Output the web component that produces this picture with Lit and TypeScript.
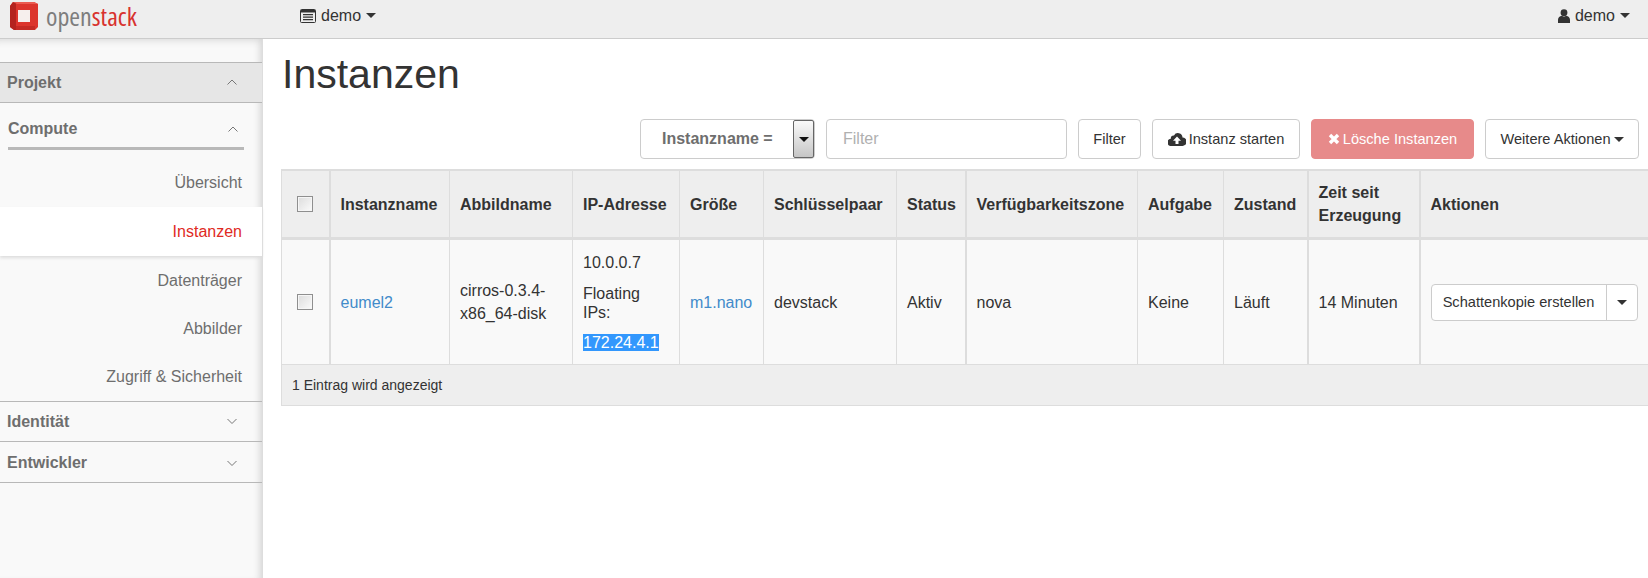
import { LitElement, html, css, svg } from "lit";
import { customElement } from "lit/decorators.js";

const caret = html`<svg class="caret" width="10" height="5" viewBox="0 0 10 5"><path d="M0 0h10L5 5z" fill="currentColor"/></svg>`;

const chevUp = svg`<path d="M.5 5.5L5 1l4.5 4.5" fill="none" stroke="currentColor" stroke-width="1"/>`;
const chevDown = svg`<path d="M.5 1L5 5.5 9.5 1" fill="none" stroke="currentColor" stroke-width="1"/>`;

@customElement("app-root")
export class AppRoot extends LitElement {
  static styles = css`
    :host {
      display: block;
      width: 1648px;
      height: 578px;
      overflow: hidden;
      background: #fff;
      font-family: "Liberation Sans", Arial, sans-serif;
      font-size: 16px;
      color: #333;
    }
    .topbar {
      height: 38px;
      background: #eee;
      border-bottom: 1px solid #ccc;
      display: flex;
      align-items: flex-start;
      box-sizing: content-box;
    }
    .brand {
      width: 300px;
      display: flex;
      align-items: center;
      padding: 1px 0 0 9px;
      box-sizing: border-box;
      height: 31px;
    }
    .wordmark {
      font-family: "Open Sans", sans-serif;
      font-size: 26px;
      font-weight: 500;
      font-stretch: 75%;
      line-height: 30px;
      color: #7d7d7d;
      margin-left: 7px;
      white-space: nowrap;
    }
    .wordmark b {
      font-weight: 500;
      color: #d8322e;
    }
    .menu {
      display: flex;
      align-items: center;
      gap: 5px;
      height: 31px;
      color: #333;
    }
    .spacer {
      flex: 1;
    }
    .usermenu {
      margin-right: 18px;
    }
    .body {
      display: flex;
      height: 539px;
    }
    .side {
      width: 263px;
      flex: none;
      background: #f9f9f9;
      box-shadow: inset -7px 0 7px -5px #d4d4d4, inset 0 9px 7px -7px #dcdcdc;
      border-right: 1px solid #ddd;
      box-sizing: border-box;
      padding-top: 23px;
      color: #6e6e6e;
    }
    .sec {
      height: 40px;
      border-bottom: 1px solid #b8b8b8;
      display: flex;
      align-items: center;
      justify-content: space-between;
      padding: 0 25px 0 7px;
      font-weight: 700;
      box-sizing: border-box;
    }
    .sec.top {
      background: #e6e6e6;
      border-top: 1px solid #b8b8b8;
      height: 41px;
    }
    .sec.tall {
      height: 41px;
      padding-top: 2px;
    }
    .sec.compute {
      border: 0;
      height: 47px;
      margin-left: 8px;
      padding: 8px 6px 0 0;
      border-bottom: 3px solid #b9b9b9;
      width: 236px;
    }
    .chev {
      color: #777;
    }
    .items {
      padding-top: 9px;
    }
    .item {
      height: 48px;
      display: flex;
      align-items: center;
      justify-content: flex-end;
      padding: 2px 20px 0 0;
      box-sizing: border-box;
    }
    .item.first {
      padding-top: 0;
    }
    .item.active {
      background: #fff;
      color: #e02a23;
      height: 49px;
      padding-top: 0;
      box-shadow: 0 2px 3px #ddd;
    }
    .item.last {
      height: 50px;
      padding-top: 0;
      border-bottom: 1px solid #b8b8b8;
    }
    .main {
      flex: 1;
      min-width: 0;
      padding-left: 18px;
    }
    h1 {
      margin: 0;
      font-weight: 400;
      font-size: 41px;
      line-height: 50px;
      padding-top: 10px;
      padding-left: 1px;
      height: 80px;
      box-sizing: border-box;
      color: #333;
    }
    .toolbar {
      display: flex;
      justify-content: flex-end;
      gap: 11px;
      height: 40px;
      padding-right: 9px;
      margin-bottom: 10px;
    }
    .btn {
      height: 40px;
      border: 1px solid #ccc;
      border-radius: 4px;
      background: #fff;
      display: flex;
      align-items: center;
      justify-content: center;
      gap: 3px;
      box-sizing: border-box;
      font-size: 14.6px;
    }
    .select {
      width: 175px;
      justify-content: flex-start;
      font-size: 16px;
      font-weight: 700;
      color: #6e6e6e;
      padding-left: 21px;
      position: relative;
    }
    .selarrow {
      position: absolute;
      right: 0;
      top: 0;
      width: 21px;
      height: 38px;
      box-sizing: border-box;
      border: 1px solid #666;
      border-radius: 2px;
      background: linear-gradient(#fafafa, #c6c6c6);
      display: flex;
      align-items: center;
      justify-content: center;
      color: #111;
    }
    .filter {
      width: 241px;
      justify-content: flex-start;
      font-size: 16px;
      color: #b0b0b0;
      padding-left: 16px;
    }
    .w63 {
      width: 63px;
    }
    .w148 {
      width: 148px;
    }
    .w163 {
      width: 163px;
    }
    .w154 {
      width: 154px;
    }
    .danger {
      background: #e78a8a;
      border-color: #e78a8a;
      color: #fff;
    }
    table {
      border-collapse: collapse;
      table-layout: fixed;
      width: 1367px;
      background: #f9f9f9;
    }
    th,
    td {
      border-left: 1px solid #ddd;
      border-right: 1px solid #ddd;
      padding: 0 10px;
      text-align: left;
      vertical-align: middle;
      line-height: 23px;
    }
    th:last-child,
    tbody td:last-child {
      border-right: 0;
    }
    th {
      background: #eee;
      height: 66px;
      border-top: 2px solid #ddd;
      border-bottom: 3px solid #ddd;
      font-weight: 700;
    }
    td {
      height: 124px;
      border-bottom: 1px solid #ddd;
    }
    .thick {
      border-right: 2px solid #ddd;
    }
    tfoot td {
      height: 40px;
      background: #eee;
      font-size: 14px;
      border-right: 0;
      border-bottom: 1px solid #ddd;
    }
    .check {
      width: 16px;
      height: 16px;
      display: block;
      margin: 0 auto;
      box-sizing: border-box;
      border: 1px solid #8f8f8f;
      background: linear-gradient(135deg, #dcdcdc, #fbfbfb);
      box-shadow: inset 0 0 0 1px #f6f6f6;
    }
    a {
      color: #428bca;
    }
    .ips p {
      margin: 0 0 10px;
    }
    .ips p:last-child {
      margin: 0;
    }
    .ips .fl {
      line-height: 19px;
      margin-bottom: 9px;
    }
    .sel {
      background: #3297fd;
      color: #fff;
    }
    .split {
      display: flex;
      width: 207px;
      height: 37px;
      border: 1px solid #ccc;
      border-radius: 4px;
      background: #fff;
      box-sizing: border-box;
      align-items: center;
      font-size: 14.6px;
    }
    .split span {
      flex: 1;
      text-align: center;
      white-space: nowrap;
    }
    .split i {
      width: 31px;
      height: 100%;
      border-left: 1px solid #ccc;
      display: flex;
      align-items: center;
      justify-content: center;
      box-sizing: border-box;
    }
  `;

  render() {
    return html`
      <div class="topbar">
        <div class="brand">
          <svg width="30" height="30" viewBox="0 0 30 30">
            <path d="M1 5 4 1h21l4 2v23l-3 3H5l-4-3z" fill="#dc342c"/>
            <path d="M1 5 4 1h3v28H5l-4-3z" fill="#b4231e"/>
            <path d="M4 1h21l4 2H8z" fill="#ea5a50"/>
            <path d="M7 25h19v4H7z" fill="#c52a24"/>
            <rect x="9" y="9" width="12" height="12" fill="#f6efed"/>
          </svg>
          <span class="wordmark">open<b>stack</b></span>
        </div>
        <div class="menu">
          <svg width="16" height="14" viewBox="0 0 16 14">
            <path d="M1.500.5h13a1 1 0 0 1 1 1v11a1 1 0 0 1-1 1h-13a1 1 0 0 1-1-1v-11a1 1 0 0 1 1-1z" fill="none" stroke="#333"/>
            <path d="M1 1h14v2.500H1zM3 5h10v1.300H3zM3 7.500h10v1.300H3zM3 10h10v1.300H3z" fill="#333"/>
          </svg>
          demo ${caret}
        </div>
        <div class="spacer"></div>
        <div class="menu usermenu">
          <svg width="12" height="14" viewBox="0 0 12 14">
            <circle cx="6" cy="3.700" r="3.400" fill="#333"/>
            <path d="M0 14v-3.300C0 8.400 1.800 7 3.700 6.700c1.400 1 3.200 1 4.600 0 1.900.3 3.700 1.700 3.700 4V14z" fill="#333"/>
          </svg>
          demo ${caret}
        </div>
      </div>
      <div class="body">
        <nav class="side">
          <div class="sec top">Projekt <svg class="chev" width="10" height="7">${chevUp}</svg></div>
          <div class="sec compute">Compute <svg class="chev" width="10" height="7">${chevUp}</svg></div>
          <div class="items">
            <div class="item first">Übersicht</div>
            <div class="item active">Instanzen</div>
            <div class="item">Datenträger</div>
            <div class="item">Abbilder</div>
            <div class="item last">Zugriff &amp; Sicherheit</div>
          </div>
          <div class="sec">Identität <svg class="chev" width="10" height="7">${chevDown}</svg></div>
          <div class="sec tall">Entwickler <svg class="chev" width="10" height="7">${chevDown}</svg></div>
        </nav>
        <main class="main">
          <h1>Instanzen</h1>
          <div class="toolbar">
            <div class="btn select">Instanzname =
              <span class="selarrow">${caret}</span>
            </div>
            <div class="btn filter">Filter</div>
            <div class="btn w63">Filter</div>
            <div class="btn w148">
              <svg width="18" height="14" viewBox="0 0 18 14">
                <path d="M14.500 5.500A4.500 4.500 0 0 0 6 3.600 3 3 0 0 0 2.800 6.700 3.600 3.600 0 0 0 3.600 14h10.600a4.200 4.200 0 0 0 .3-8.500z" fill="#333"/>
                <path d="M9 4.500l4 4.200h-2.500V12h-3V8.700H5z" fill="#fff"/>
              </svg>
              Instanz starten
            </div>
            <div class="btn danger w163">
              <svg width="12" height="12" viewBox="0 0 12 12"><path d="M2 2l8 8M10 2l-8 8" stroke="#fff" stroke-width="3.400"/></svg>
              Lösche Instanzen
            </div>
            <div class="btn w154">Weitere Aktionen ${caret}</div>
          </div>
          <table>
            <colgroup>
              <col style="width:48px"/><col style="width:120px"/><col style="width:123px"/><col style="width:107px"/>
              <col style="width:84px"/><col style="width:133px"/><col style="width:69px"/><col style="width:172px"/>
              <col style="width:86px"/><col style="width:84px"/><col style="width:112px"/><col/>
            </colgroup>
            <thead>
              <tr>
                <th class="thick"><span class="check"></span></th>
                <th>Instanzname</th><th>Abbildname</th><th>IP-Adresse</th><th>Größe</th>
                <th>Schlüsselpaar</th><th class="thick">Status</th><th>Verfügbarkeitszone</th>
                <th>Aufgabe</th><th class="thick">Zustand</th><th class="thick">Zeit seit Erzeugung</th><th>Aktionen</th>
              </tr>
            </thead>
            <tbody>
              <tr>
                <td class="thick"><span class="check"></span></td>
                <td><a>eumel2</a></td>
                <td>cirros-0.3.4-x86_64-disk</td>
                <td class="ips">
                  <p>10.0.0.7</p>
                  <p class="fl">Floating IPs:</p>
                  <p><span class="sel">172.24.4.1</span></p>
                </td>
                <td><a>m1.nano</a></td>
                <td>devstack</td>
                <td class="thick">Aktiv</td>
                <td>nova</td>
                <td>Keine</td>
                <td class="thick">Läuft</td>
                <td class="thick">14 Minuten</td>
                <td>
                  <div class="split"><span>Schattenkopie erstellen</span><i>${caret}</i></div>
                </td>
              </tr>
            </tbody>
            <tfoot>
              <tr><td colspan="12">1 Eintrag wird angezeigt</td></tr>
            </tfoot>
          </table>
        </main>
      </div>
    `;
  }
}
